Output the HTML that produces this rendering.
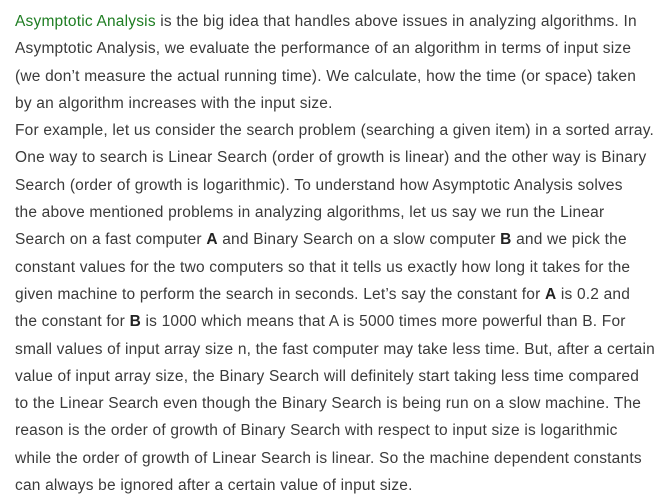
<!DOCTYPE html>
<html><head><meta charset="utf-8"><style>
html,body{margin:0;padding:0;background:#fff;width:657px;height:502px;overflow:hidden}
.t{position:absolute;left:15px;top:8px;font-family:"Liberation Sans",sans-serif;font-size:15.5px;letter-spacing:0.2px;color:#3a3a3a;line-height:27.3px;white-space:nowrap}
.g{color:#1e7d22}
b{font-weight:bold;color:#222}
</style></head><body><div class="t">
<span class="g">Asymptotic Analysis</span> is the big idea that handles above issues in analyzing algorithms. In<br>
Asymptotic Analysis, we evaluate the performance of an algorithm in terms of input size<br>
(we don’t measure the actual running time). We calculate, how the time (or space) taken<br>
by an algorithm increases with the input size.<br>
For example, let us consider the search problem (searching a given item) in a sorted array.<br>
One way to search is Linear Search (order of growth is linear) and the other way is Binary<br>
Search (order of growth is logarithmic). To understand how Asymptotic Analysis solves<br>
the above mentioned problems in analyzing algorithms, let us say we run the Linear<br>
Search on a fast computer <b>A</b> and Binary Search on a slow computer <b>B</b> and we pick the<br>
constant values for the two computers so that it tells us exactly how long it takes for the<br>
given machine to perform the search in seconds. Let’s say the constant for <b>A</b> is 0.2 and<br>
the constant for <b>B</b> is 1000 which means that A is 5000 times more powerful than B. For<br>
small values of input array size n, the fast computer may take less time. But, after a certain<br>
value of input array size, the Binary Search will definitely start taking less time compared<br>
to the Linear Search even though the Binary Search is being run on a slow machine. The<br>
reason is the order of growth of Binary Search with respect to input size is logarithmic<br>
while the order of growth of Linear Search is linear. So the machine dependent constants<br>
can always be ignored after a certain value of input size.
</div></body></html>
